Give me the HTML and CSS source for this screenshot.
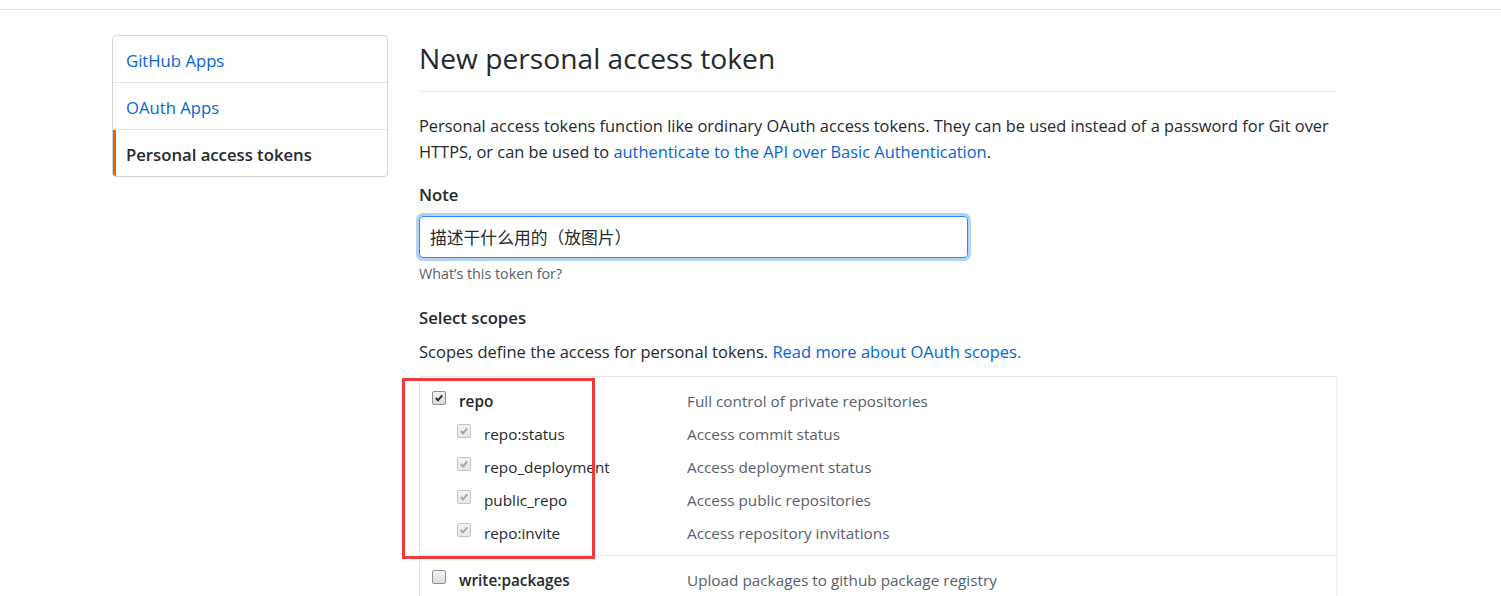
FILE: index.html
```html
<!DOCTYPE html>
<html lang="en">
<head>
<meta charset="utf-8">
<title>New personal access token</title>
<link rel="stylesheet" href="styles.css">
</head>
<body>
<div class="header"></div>
<div class="container">
  <nav class="menu">
    <a class="menu-item" href="#">GitHub Apps</a>
    <a class="menu-item" href="#">OAuth Apps</a>
    <a class="menu-item selected" href="#">Personal access tokens</a>
  </nav>
  <main class="main">
    <div class="subhead"><h2 class="subhead-heading">New personal access token</h2></div>
    <p class="intro">Personal access tokens function like ordinary OAuth access tokens. They can be used instead of a password for Git over HTTPS, or can be used to <a href="#">authenticate to the API over Basic Authentication</a>.</p>
    <div class="form-group">
      <label class="label">Note</label>
      <div class="input">描述干什么用的（放图片）</div>
      <p class="note">What’s this token for?</p>
    </div>
    <div class="form-group scopes">
      <label class="label">Select scopes</label>
      <p class="scopes-desc">Scopes define the access for personal tokens. <a href="#">Read more about OAuth scopes.</a></p>
      <div class="scope-box">
        <div class="annotation"></div>
        <div class="scope-group">
          <div class="scope-row">
            <div class="scope-name top"><span class="cb checked"><svg viewBox="0 0 13 13"><path d="M3 6.6 L5.4 9 L10 3.6"/></svg></span><b>repo</b></div>
            <div class="scope-desc">Full control of private repositories</div>
          </div>
          <div class="scope-row">
            <div class="scope-name sub"><span class="cb checked disabled"><svg viewBox="0 0 13 13"><path d="M3 6.6 L5.4 9 L10 3.6"/></svg></span>repo:status</div>
            <div class="scope-desc">Access commit status</div>
          </div>
          <div class="scope-row">
            <div class="scope-name sub"><span class="cb checked disabled"><svg viewBox="0 0 13 13"><path d="M3 6.6 L5.4 9 L10 3.6"/></svg></span>repo_deployment</div>
            <div class="scope-desc">Access deployment status</div>
          </div>
          <div class="scope-row">
            <div class="scope-name sub"><span class="cb checked disabled"><svg viewBox="0 0 13 13"><path d="M3 6.6 L5.4 9 L10 3.6"/></svg></span>public_repo</div>
            <div class="scope-desc">Access public repositories</div>
          </div>
          <div class="scope-row">
            <div class="scope-name sub"><span class="cb checked disabled"><svg viewBox="0 0 13 13"><path d="M3 6.6 L5.4 9 L10 3.6"/></svg></span>repo:invite</div>
            <div class="scope-desc">Access repository invitations</div>
          </div>
        </div>
        <div class="scope-group">
          <div class="scope-row">
            <div class="scope-name top"><span class="cb"></span><b>write:packages</b></div>
            <div class="scope-desc">Upload packages to github package registry</div>
          </div>
        </div>
      </div>
    </div>
  </main>
</div>
</body>
</html>
```

FILE: styles.css
```css
* { box-sizing: border-box; }
html, body { margin: 0; padding: 0; background: #fff; }
body {
  font-family: "Open Sans", "Noto Sans CJK SC", sans-serif;
  font-size: 16.7px;
  line-height: 26px;
  color: #24292e;
  overflow: hidden;
  height: 596px;
}
a { color: #0366d6; text-decoration: none; }

.header { height: 10px; border-bottom: 1px solid #e1e4e8; }

.container {
  display: flex;
  gap: 31px;
  margin-left: 112px;
  width: 1225px;
  padding-top: 25px;
  align-items: flex-start;
}

.menu {
  width: 276px;
  flex: none;
  display: flex;
  flex-direction: column;
  border: 1px solid #d1d5da;
  border-radius: 4px;
  overflow: hidden;
}
.menu-item {
  display: block;
  padding: 12px 13px 8px 13px;
  line-height: 26px;
  border-bottom: 1px solid #e1e4e8;
}
.menu-item:last-child { border-bottom: 0; }
.menu-item.selected {
  color: #24292e;
  font-weight: 600;
  border-left: 3px solid #e36209;
  padding-left: 10px;
}

.main { width: 918px; flex: none; }

.subhead {
  border-bottom: 1px solid #e1e4e8;
  padding-bottom: 10px;
  margin-bottom: 21px;
}
.subhead-heading {
  margin: 0;
  font-size: 28.2px;
  font-weight: 400;
  line-height: 46px;
}

.intro { margin: 0 0 17px; font-size: 16.4px; }

.label { display: block; font-weight: 600; }

.input {
  margin-top: 8px;
  width: 549px;
  height: 42px;
  border: 1px solid #2188ff;
  border-radius: 4px;
  box-shadow: 0 0 0 3px rgba(3, 102, 214, 0.3);
  padding: 0 10px;
  font-family: "Noto Sans CJK SC", sans-serif;
  font-size: 16.8px;
  line-height: 40px;
  color: #24292e;
}

.note {
  margin: 6px 0 0;
  font-size: 14.3px;
  line-height: 20px;
  color: #586069;
}

.scopes { margin-top: 21px; }
.scopes-desc { margin: 8px 0 11px; font-size: 16.5px; }

.scope-box {
  position: relative;
  border: 1px solid #e1e4e8;
  border-right: 1px solid #eaecef;
  border-radius: 4px 4px 0 0;
  border-bottom: 0;
  font-size: 15.3px;
}
.scope-group {
  padding: 7px 0 6px;
  border-bottom: 1px solid #e1e4e8;
}
.scope-group:last-child { border-bottom: 0; }
.scope-row {
  display: flex;
  height: 33px;
  align-items: center;
}
.scope-name {
  width: 267px;
  flex: none;
  display: flex;
  align-items: center;
}
.scope-name.top { padding-left: 12px; }
.scope-name.sub { padding-left: 37px; }
.scope-name b { font-weight: 600; }
.scope-desc { color: #586069; }

.cb {
  width: 14px;
  height: 14px;
  flex: none;
  margin-right: 13px;
  margin-top: -6px;
  border: 1px solid #8f8f8f;
  border-radius: 2px;
  background: linear-gradient(#f4f4f4, #dcdcdc);
  display: inline-flex;
  align-items: center;
  justify-content: center;
}
.cb svg { width: 12px; height: 12px; }
.cb path { fill: none; stroke: #333; stroke-width: 2.2; }
.cb.disabled { border-color: #c4c4c4; background: linear-gradient(#f2f2f2, #e6e6e6); }
.cb.disabled path { stroke: #a6a6a6; }

.annotation {
  position: absolute;
  left: -18px;
  top: 1px;
  width: 193px;
  height: 181px;
  border: 3px solid #f33a3a;
  pointer-events: none;
  z-index: 2;
}
```
